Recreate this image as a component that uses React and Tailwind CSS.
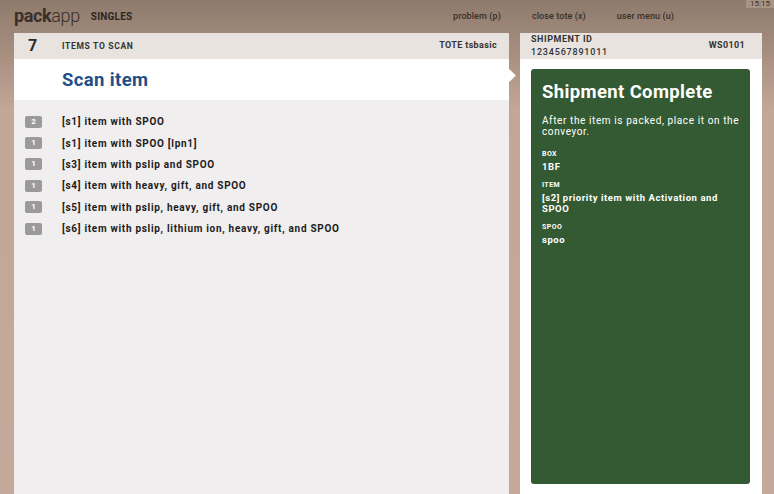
import React from "react";

const items = [
  { qty: 2, name: "[s1] item with SPOO" },
  { qty: 1, name: "[s1] item with SPOO [lpn1]" },
  { qty: 1, name: "[s3] item with pslip and SPOO" },
  { qty: 1, name: "[s4] item with heavy, gift, and SPOO" },
  { qty: 1, name: "[s5] item with pslip, heavy, gift, and SPOO" },
  { qty: 1, name: "[s6] item with pslip, lithium ion, heavy, gift, and SPOO" },
];

function Field({ label, children }) {
  return (
    <div className="mb-[8px]">
      <div className="text-[7px] font-bold tracking-[0.06em] leading-[10px]">{label}</div>
      <div className="text-[9.5px] font-bold tracking-[0.06em] leading-[11px] mt-[2px]">{children}</div>
    </div>
  );
}

function App() {
  return (
    <div
      className="h-screen overflow-hidden flex flex-col text-[#1f1f1f] bg-[linear-gradient(to_bottom,#8e7b6d_0%,#a58d7e_10%,#c2a696_22%,#c4a899_100%)]"
      style={{ fontFamily: "Roboto, 'Liberation Sans', sans-serif" }}
    >
      {/* top bar */}
      <header className="relative h-[33px] flex items-center pl-[14px] shrink-0">
        <div className="text-[18px] leading-none text-[#3a3029] tracking-[-0.02em] -mt-[2px]">
          <span className="font-bold">pack</span>
          <span className="font-light">app</span>
        </div>
        <div className="ml-[11px] text-[10px] font-bold text-[#2e2620] tracking-[0.02em]">SINGLES</div>
        <nav className="ml-auto mr-[100px] flex gap-[31px] text-[9px] font-medium text-[#3a3029] tracking-[0.01em]">
          <span>problem (p)</span>
          <span>close tote (x)</span>
          <span>user menu (u)</span>
        </nav>
        <div className="absolute right-0 top-0 px-[4px] h-[8px] leading-[8px] text-[8px] text-[#3a3029] bg-[#a89485]">15:15</div>
      </header>

      <main className="flex-1 flex pl-[14px] pr-[12px] gap-[11px] min-h-0">
        {/* left panel */}
        <section className="w-[495px] flex flex-col bg-[#f0eeef] relative">
          <div className="h-[26px] flex items-center bg-[#e8e3df] shrink-0">
            <div className="w-[48px] pl-[14px] text-[16px] font-bold text-[#2a2a2a]">7</div>
            <div className="text-[8.5px] font-bold tracking-[0.08em] text-[#333]">ITEMS TO SCAN</div>
            <div className="ml-auto pr-[12px] text-[9px] font-bold tracking-[0.04em] text-[#333]">TOTE tsbasic</div>
          </div>
          <div className="h-[41px] flex items-center bg-white pl-[48px] pt-[2px] shrink-0">
            <h1 className="text-[18.5px] font-bold text-[#1f4f86] tracking-[0.02em]">Scan item</h1>
          </div>
          <ul className="pt-[11px]">
            {items.map((it, i) => (
              <li key={i} className="h-[21.4px] flex items-center">
                <span className="ml-[11px] w-[17px] h-[12px] rounded-[2px] bg-[#9b9a9a] text-white text-[8px] font-bold flex items-center justify-center">
                  {it.qty}
                </span>
                <span className="ml-[20px] text-[10px] font-bold tracking-[0.07em] text-[#1c1c1c]">{it.name}</span>
              </li>
            ))}
          </ul>
          {/* pointer into the shipment panel */}
          <div className="absolute right-[-5px] top-[38px] w-[9px] h-[9px] bg-white rotate-45"></div>
        </section>

        {/* right panel */}
        <section className="w-[242px] flex flex-col bg-white">
          <div className="h-[26px] flex items-center bg-[#e8e3df] pl-[11px] pr-[17px] shrink-0">
            <div className="text-[9px] font-bold tracking-[0.06em] text-[#333] leading-[13px]">
              <div>SHIPMENT ID</div>
              <div className="font-medium tracking-[0.09em]">1234567891011</div>
            </div>
            <div className="ml-auto text-[9px] font-bold tracking-[0.04em] text-[#333]">WS0101</div>
          </div>
          <div className="flex-1 p-[10px] pl-[11px] pr-[12px] min-h-0">
            <div className="h-full rounded-[3px] bg-[#345a33] text-white pl-[11px] pr-[9px] pt-[12px]">
              <h2 className="text-[18.5px] font-bold tracking-[0.02em] leading-[22px]">Shipment Complete</h2>
              <p className="mt-[12px] text-[10px] tracking-[0.06em] leading-[11px] mb-[12px]">
                After the item is packed, place it on the conveyor.
              </p>
              <Field label="BOX">1BF</Field>
              <Field label="ITEM">[s2] priority item with Activation and SPOO</Field>
              <Field label="SPOO">spoo</Field>
            </div>
          </div>
        </section>
      </main>
    </div>
  );
}

export default App;
